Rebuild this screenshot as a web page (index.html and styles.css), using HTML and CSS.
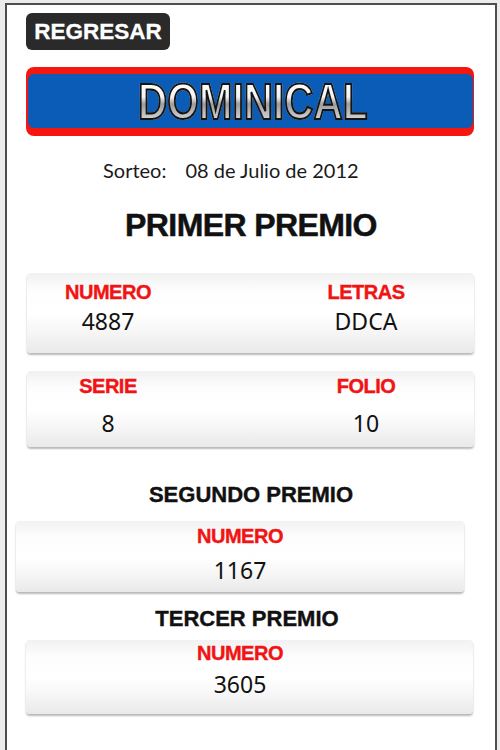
FILE: index.html
```html
<!DOCTYPE html>
<html lang="es">
<head>
<meta charset="utf-8">
<title>Dominical</title>
<link rel="stylesheet" href="styles.css">
</head>
<body>
<div class="frame">
  <div class="btn">REGRESAR</div>
  <div class="banner">
    <div class="banner-inner"><span class="banner-text">DOMINICAL</span></div>
  </div>
  <div class="sorteo"><span>Sorteo:</span><span>08 de Julio de 2012</span></div>
  <h1 class="title-main">PRIMER PREMIO</h1>

  <div class="card card-a">
    <div class="cell"><div class="label">NUMERO</div><div class="value">4887</div></div>
    <div class="cell"><div class="label">LETRAS</div><div class="value">DDCA</div></div>
  </div>
  <div class="card card-b">
    <div class="cell"><div class="label">SERIE</div><div class="value">8</div></div>
    <div class="cell"><div class="label">FOLIO</div><div class="value">10</div></div>
  </div>

  <h2 class="title-sub title-2">SEGUNDO PREMIO</h2>
  <div class="card card-c">
    <div class="cell"><div class="label">NUMERO</div><div class="value">1167</div></div>
  </div>

  <h2 class="title-sub title-3">TERCER PREMIO</h2>
  <div class="card card-d">
    <div class="cell"><div class="label">NUMERO</div><div class="value">3605</div></div>
  </div>
</div>
</body>
</html>
```
FILE: styles.css
```css
html, body {
  margin: 0;
  padding: 0;
  height: 750px;
  overflow: hidden;
  background: #ececec;
}
.frame {
  box-sizing: border-box;
  margin: 3px 0 0 5px;
  width: 492px;
  height: 747px;
  border: 2px solid #4d4d4d;
  border-bottom: none;
  background: #fff;
  display: flex;
  flex-direction: column;
  align-items: flex-start;
  font-family: "Liberation Sans", Arial, sans-serif;
}
.btn {
  margin: 8px 0 0 19px;
  width: 144px;
  height: 37px;
  line-height: 37px;
  border-radius: 6px;
  background: #2a2a2a;
  color: #fff;
  font-weight: bold;
  font-size: 22.5px;
  text-align: center;
  -webkit-text-stroke: 0.3px #fff;
}
.banner {
  box-sizing: border-box;
  margin: 17px 0 0 19px;
  width: 448px;
  height: 69px;
  padding: 7px 1px 8px 2px;
  background: #f5170f;
  border-radius: 8px;
  display: flex;
}
.banner-inner {
  flex: 1;
  background: #0b5cb7;
  border-radius: 6px;
  display: flex;
  align-items: center;
  justify-content: center;
}
.banner-text {
  display: inline-block;
  font-size: 50px;
  line-height: 50px;
  font-weight: bold;
  transform: scaleX(0.81);
  background: linear-gradient(to bottom, #ffffff 0%, #f4f4f4 40%, #9c9c9c 54%, #bdbdbd 72%, #ececec 100%);
  -webkit-background-clip: text;
  background-clip: text;
  -webkit-text-fill-color: transparent;
  -webkit-text-stroke: 2.2px #141414;
  margin-top: 1px;
  margin-left: 5px;
}
.sorteo {
  margin: 22px 0 0 96px;
  display: flex;
  gap: 19px;
  font-family: Lato, "Open Sans", sans-serif;
  font-size: 20px;
  line-height: 24px;
  color: #1a1a1a;
}
.title-main {
  align-self: stretch;
  margin: 28px 0 0 0;
  text-align: center;
  font-size: 32px;
  line-height: 31px;
  letter-spacing: -0.6px;
  font-weight: bold;
  color: #111;
  -webkit-text-stroke: 0.5px #111;
}
.title-sub {
  align-self: stretch;
  margin: 0;
  text-align: center;
  font-size: 22px;
  line-height: 22px;
  font-weight: bold;
  color: #111;
  -webkit-text-stroke: 0.4px #111;
}
.title-2 { margin-top: 37px; }
.title-3 { margin-top: 16px; padding-right: 8px; }
.card {
  box-sizing: border-box;
  border-radius: 4px;
  background: linear-gradient(to bottom, #f1f1f1 0%, #fdfdfd 22%, #ffffff 50%, #f7f7f7 72%, #e9e9e9 100%);
  box-shadow: 0 2px 2px rgba(0, 0, 0, 0.28);
  display: grid;
}
.card-a, .card-b {
  margin-left: 20px;
  width: 447px;
  grid-template-columns: 162px 162px;
  justify-content: space-between;
  padding-right: 27px;
}
.card-a { margin-top: 32px; height: 80px; padding-top: 9px; }
.card-b { margin-top: 18px; height: 76px; padding-top: 5px; }
.card-c {
  margin: 15px 0 0 9px;
  width: 448px;
  height: 71px;
  padding-top: 5px;
  justify-items: center;
}
.card-d {
  margin: 10px 0 0 19px;
  width: 447px;
  height: 74px;
  padding: 3px 19px 0 0;
  justify-items: center;
}
.cell {
  display: flex;
  flex-direction: column;
  align-items: center;
}
.label {
  font-size: 20px;
  line-height: 20px;
  letter-spacing: -0.5px;
  font-weight: bold;
  color: #f01414;
  -webkit-text-stroke: 0.4px #f01414;
}
.value {
  font-family: "Noto Sans", "Open Sans", sans-serif;
  font-size: 23px;
  line-height: 23px;
  color: #111;
}
.card-a .value { margin-top: 8px; }
.card-b .value { margin-top: 16px; }
.card-c .value { margin-top: 13px; }
.card-d .value { margin-top: 10px; }
```
